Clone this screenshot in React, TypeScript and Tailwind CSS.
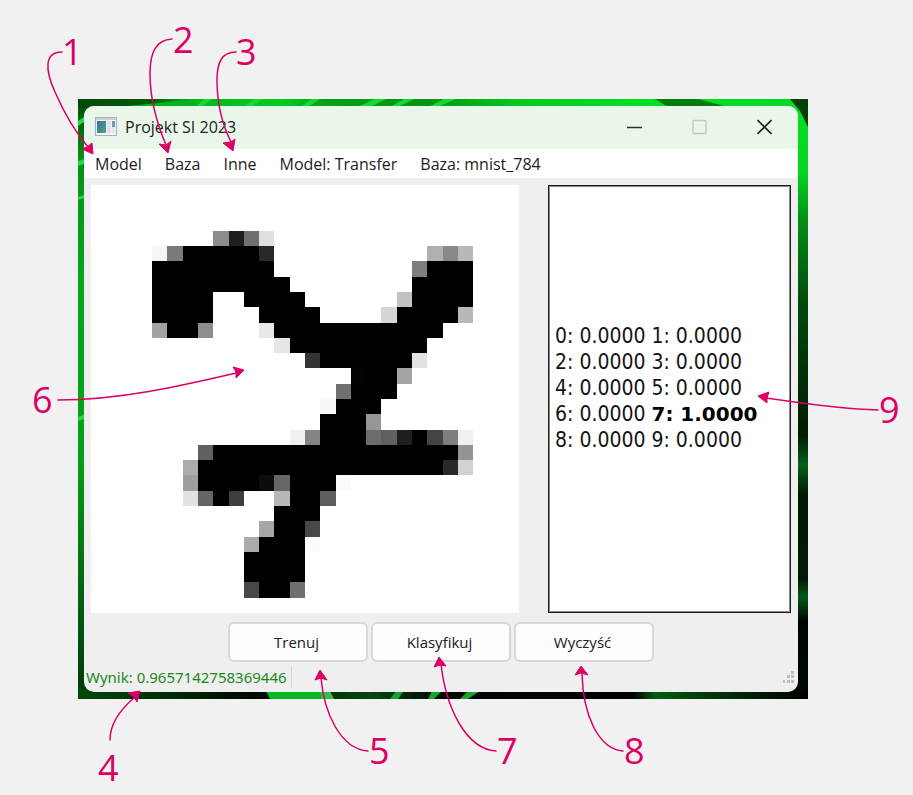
import React from "react";

type Run = [col: number, length: number, shade: string];

const K = "#000000";

// Each entry is one row of the 28x28 drawing grid: [first column, run length, colour]
const DIGIT: Record<number, Run[]> = {
  3: [[8, 1, "#8c8c8c"], [9, 1, "#1e1e1e"], [10, 1, "#707070"], [11, 1, "#e0e0e0"]],
  4: [[4, 1, "#f5f5f5"], [5, 1, "#7a7a7a"], [6, 5, K], [11, 1, "#282828"], [22, 1, "#b0b0b0"], [23, 1, "#888888"], [24, 1, "#b8b8b8"]],
  5: [[4, 8, K], [21, 1, "#7e7e7e"], [22, 3, K]],
  6: [[4, 9, K], [21, 4, K]],
  7: [[4, 4, K], [10, 4, K], [20, 1, "#c2c2c2"], [21, 4, K]],
  8: [[4, 4, K], [11, 4, K], [19, 1, "#d6d6d6"], [20, 4, K], [24, 1, "#b8b8b8"]],
  9: [[4, 1, "#a2a2a2"], [5, 2, K], [7, 1, "#8e8e8e"], [11, 1, "#e8e8e8"], [12, 11, K]],
  10: [[12, 1, "#e6e6e6"], [13, 9, K]],
  11: [[14, 1, "#343434"], [15, 6, K], [21, 1, "#e2e2e2"]],
  12: [[17, 1, "#030303"], [18, 2, K], [20, 1, "#a4a4a4"]],
  13: [[16, 1, "#707070"], [17, 3, K]],
  14: [[15, 1, "#f8f8f8"], [16, 3, K]],
  15: [[15, 3, K], [18, 1, "#969696"]],
  16: [[13, 1, "#f0f0f0"], [14, 1, "#848484"], [15, 3, K], [18, 1, "#6c6c6c"], [19, 1, "#606060"], [20, 1, "#1e1e1e"], [21, 1, K], [22, 1, "#444444"], [23, 1, "#7e7e7e"], [24, 1, "#f0f0f0"]],
  17: [[7, 1, "#606060"], [8, 16, K], [24, 1, "#949494"]],
  18: [[6, 1, "#acacac"], [7, 16, K], [23, 1, "#282828"], [24, 1, "#d2d2d2"]],
  19: [[6, 1, "#9e9e9e"], [7, 4, K], [11, 1, "#0c0c0c"], [12, 1, "#666666"], [13, 3, K], [16, 1, "#fafafa"]],
  20: [[6, 1, "#e2e2e2"], [7, 1, "#646464"], [8, 1, K], [9, 1, "#3e3e3e"], [12, 1, "#b8b8b8"], [13, 2, K], [15, 1, "#5e5e5e"]],
  21: [[12, 3, K]],
  22: [[11, 1, "#a6a6a6"], [12, 2, K], [14, 1, "#484848"]],
  23: [[10, 1, "#aaaaaa"], [11, 3, K], [14, 1, "#fcfcfc"]],
  24: [[10, 4, K]],
  25: [[10, 4, K]],
  26: [[10, 1, "#484848"], [11, 2, K], [13, 1, "#707070"]],
};

function DigitCanvas() {
  return (
    <svg viewBox="0 0 28 28" shapeRendering="crispEdges" className="block aspect-square w-full bg-white" role="img" aria-label="7">
      {Object.entries(DIGIT).map(([row, runs]) =>
        runs.map(([col, length, shade]) => (
          <rect key={`${row}-${col}`} x={col} y={Number(row)} width={length} height={1} fill={shade} />
        )),
      )}
    </svg>
  );
}

function Wallpaper() {
  return (
    <svg viewBox="0 0 730 600" preserveAspectRatio="none" className="absolute inset-0 h-full w-full" aria-hidden="true">
      <defs>
        <linearGradient id="wpTop" x1="0" x2="1" y1="0" y2="0">
          <stop offset="0" stopColor="#004a0a" />
          <stop offset="0.1" stopColor="#025a0c" />
          <stop offset="0.16" stopColor="#04b81c" />
          <stop offset="0.28" stopColor="#03cc1e" />
          <stop offset="0.34" stopColor="#03a018" />
          <stop offset="0.48" stopColor="#029414" />
          <stop offset="0.6" stopColor="#04c81e" />
          <stop offset="0.78" stopColor="#04e024" />
          <stop offset="1" stopColor="#04d822" />
        </linearGradient>
        <linearGradient id="wpLeft" x1="0" x2="0" y1="0" y2="1">
          <stop offset="0" stopColor="#004a0a" />
          <stop offset="0.1" stopColor="#04901a" />
          <stop offset="0.3" stopColor="#03a818" />
          <stop offset="0.6" stopColor="#03a016" />
          <stop offset="0.85" stopColor="#025c10" />
          <stop offset="1" stopColor="#013808" />
        </linearGradient>
        <linearGradient id="wpRight" x1="0" x2="0" y1="0" y2="1">
          <stop offset="0" stopColor="#04e024" />
          <stop offset="0.12" stopColor="#04d822" />
          <stop offset="0.2" stopColor="#029014" />
          <stop offset="0.34" stopColor="#004a0c" />
          <stop offset="0.56" stopColor="#001c04" />
          <stop offset="0.61" stopColor="#04601a" />
          <stop offset="0.66" stopColor="#001804" />
          <stop offset="0.8" stopColor="#001c06" />
          <stop offset="0.83" stopColor="#045a16" />
          <stop offset="0.87" stopColor="#000400" />
          <stop offset="1" stopColor="#000800" />
        </linearGradient>
        <linearGradient id="wpBottom" x1="0" x2="1" y1="0" y2="0">
          <stop offset="0" stopColor="#014a0c" />
          <stop offset="0.12" stopColor="#012c06" />
          <stop offset="0.24" stopColor="#000600" />
          <stop offset="0.4" stopColor="#024a0e" />
          <stop offset="0.5" stopColor="#000400" />
          <stop offset="0.76" stopColor="#000000" />
          <stop offset="0.79" stopColor="#045c12" />
          <stop offset="0.9" stopColor="#012806" />
          <stop offset="1" stopColor="#000000" />
        </linearGradient>
      </defs>
      <rect width="730" height="600" fill="#012c06" />
      <rect width="10" height="600" fill="url(#wpLeft)" />
      <rect x="715" width="15" height="600" fill="url(#wpRight)" />
      <rect y="590" width="730" height="10" fill="url(#wpBottom)" />
      <rect width="730" height="9" fill="url(#wpTop)" />
      <path d="M50 7 100 2 120 0 112 8Z" fill="#04b41c" />
      <path d="M118 8 126 0H134L124 8ZM166 8 176 0H184L174 8ZM222 8 234 0H242L230 8ZM280 8 296 0H308L292 8ZM312 8 326 0H336L320 8ZM350 8 366 0H378L360 8Z" fill="#16d832" />
      <path d="M577 0 590 8H650L620 0Z" fill="#027c12" />
      <path d="M712 0H730V28L722 12Z" fill="#014208" />
      <path d="M0 22 6 18V23L0 27ZM0 62 6 60V65L0 67ZM0 98 6 96V99L0 101ZM0 318 6 316V320L0 322Z" fill="#26d844" />
      <path d="M188 592H244V600H192Z" fill="#05b824" />
      <path d="M242 592H252L256 600H244Z" fill="#30c24c" />
      <path d="M318 592H326L320 600H312ZM354 592H364L356 600H350ZM390 592H402L390 600H382Z" fill="#14a42e" />
    </svg>
  );
}

function TitleBar() {
  return (
    <header className="flex h-[43px] items-center bg-[#e9f7eb] pb-[2px] pl-[11px] pr-[26px]">
      <svg width="22" height="20" viewBox="0 0 22 20" aria-hidden="true">
        <defs>
          <linearGradient id="appIcon" x1="0" x2="1" y1="0" y2="1">
            <stop offset="0" stopColor="#3a6ea8" />
            <stop offset="1" stopColor="#4fa777" />
          </linearGradient>
        </defs>
        <rect x="0.5" y="0.5" width="21" height="18" fill="#f2f4f5" stroke="#a9b1b5" />
        <rect x="1" y="1" width="20" height="2" fill="#c9d0d6" />
        <rect x="2" y="4" width="9" height="12" fill="url(#appIcon)" />
        <rect x="12" y="4" width="4" height="12" fill="#e0e2ea" />
        <rect x="17" y="4" width="3" height="6" fill="#6f98b4" />
        <rect x="17" y="10" width="3" height="6" fill="#e4e8e8" />
      </svg>
      <h1 className="ml-2 flex-1 text-[16px] leading-5 text-[#202320]">Projekt SI 2023</h1>
      <div className="flex gap-[50px]">
        <button type="button" aria-label="Minimalizuj">
          <svg width="15" height="16" viewBox="0 0 15 16"><path d="M0 8.5H15" stroke="#2c312d" strokeWidth="1.6" /></svg>
        </button>
        <button type="button" aria-label="Maksymalizuj" disabled>
          <svg width="15" height="16" viewBox="0 0 15 16"><rect x="1" y="1.5" width="13" height="13" rx="1" fill="none" stroke="#bccabe" strokeWidth="1.4" /></svg>
        </button>
        <button type="button" aria-label="Zamknij">
          <svg width="15" height="16" viewBox="0 0 15 16"><path d="M0.5 1 14.5 15M14.5 1 0.5 15" stroke="#222623" strokeWidth="1.6" /></svg>
        </button>
      </div>
    </header>
  );
}

const MENU = ["Model", "Baza", "Inne", "Model: Transfer", "Baza: mnist_784"];

function MenuBar() {
  return (
    <nav className="flex h-[29px] items-center gap-[23px] bg-white pl-[11px] text-[16px] leading-5 text-[#1c1c1c]">
      {MENU.map((item) => (
        <button key={item} type="button" className="whitespace-nowrap">{item}</button>
      ))}
    </nav>
  );
}

function Results() {
  return (
    <output className="flex w-[243px] shrink-0 flex-col justify-center border border-[#1c1c1c] bg-white pb-[22px] pl-[6px] font-['DejaVu_Sans_Condensed','DejaVu_Sans',sans-serif] text-[21px] leading-[26px] text-[#141414] ring-1 ring-inset ring-[#8a8a8a]">
      <span>0: 0.0000 1: 0.0000</span>
      <span>2: 0.0000 3: 0.0000</span>
      <span>4: 0.0000 5: 0.0000</span>
      <span className="whitespace-nowrap">
        6: 0.0000 <b className="font-['DejaVu_Sans',sans-serif] text-[20px] text-black">7: 1.0000</b>
      </span>
      <span>8: 0.0000 9: 0.0000</span>
    </output>
  );
}

function SizeGrip() {
  return (
    <svg width="12" height="12" viewBox="0 0 12 12" fill="#bdbdbd" aria-hidden="true">
      <path d="M9 0h3v3h-3zM5 4h3v3h-3zM9 4h3v3h-3zM1 9h2v3h-2zM5 9h3v3h-3zM9 9h3v3h-3z" />
    </svg>
  );
}

function AppWindow() {
  return (
    <section className="relative overflow-hidden rounded-[10px] bg-[#efefef]">
      <TitleBar />
      <MenuBar />
      <div className="flex gap-[29px] px-[7px] pt-[7px]">
        <div className="min-w-0 flex-1">
          <DigitCanvas />
        </div>
        <Results />
      </div>
      <div className="mt-[9px] flex justify-center gap-[3px] text-[15px] leading-5 text-[#202020]">
        {["Trenuj", "Klasyfikuj", "Wyczyść"].map((label) => (
          <button key={label} type="button" className="h-10 w-[140px] rounded-[6px] border-2 border-[#d8d8d8] bg-[#fdfdfd] pr-[3px]">
            {label}
          </button>
        ))}
      </div>
      <footer className="flex h-[30px] items-center justify-between pl-[2px] pr-1">
        <p className="border-r border-[#d4d4d4] pr-1 font-['Noto_Sans',sans-serif] text-[15px] leading-[22px] text-[#1a8a1a]">
          Wynik: 0.9657142758369446
        </p>
        <SizeGrip />
      </footer>
    </section>
  );
}

const CURVES = [
  "M62 52C44 52 45 70 55 92C65 115 77 134 88 147",
  "M172 39C156 40 150 52 150 74C150 100 158 126 166 145",
  "M236 52C222 52 217 62 217 80C217 106 224 128 231 142",
  "M110 740C110 722 122 708 135 697",
  "M368 751C340 749 324 712 321 678",
  "M58 400C120 400 180 386 236 373",
  "M496 751C466 749 446 708 441 664",
  "M623 751C598 749 583 714 582 674",
  "M878 410C838 409 800 403 766 398",
];

const HEADS = [
  "M93 154 82 149 87 147 92 143Z",
  "M168 153 159 144 166 145 171 141Z",
  "M233 151 223 143 231 142 235 139Z",
  "M140 691 128 693 134 697 137 702Z",
  "M320 670 315 680 321 678 327 680Z",
  "M244 370 233 367 236 372 236 378Z",
  "M439 657 434 667 440 665 446 666Z",
  "M581 666 575 675 581 673 588 675Z",
  "M758 396 769 392 767 398 767 403Z",
];

const LABELS: [text: string, x: number, y: number][] = [
  ["1", 62, 65],
  ["2", 173, 53],
  ["3", 236, 65],
  ["4", 98, 781],
  ["5", 369, 764],
  ["6", 32, 413],
  ["7", 497, 764],
  ["8", 624, 764],
  ["9", 879, 423],
];

function Annotations() {
  return (
    <svg viewBox="0 0 913 795" className="pointer-events-none absolute inset-x-0 top-0 w-full" fill="none">
      {CURVES.map((d) => <path key={d} d={d} stroke="#dc0064" strokeWidth="1.5" strokeLinecap="round" />)}
      {HEADS.map((d) => <path key={d} d={d} fill="#dc0064" stroke="#dc0064" strokeLinejoin="round" />)}
      {LABELS.map(([text, x, y]) => (
        <text key={text} x={x} y={y} className="fill-[#dc0064] font-['Open_Sans',sans-serif] text-[36px]">{text}</text>
      ))}
    </svg>
  );
}

export default function App() {
  return (
    <main className="min-h-screen bg-[#f1f1f1] font-['Open_Sans',sans-serif]">
      <div className="relative mx-auto w-full max-w-[913px] pb-24 pl-[78px] pr-[105px] pt-[99px]">
        <div className="relative pb-[7px] pl-[6px] pr-[10px] pt-[7px]">
          <Wallpaper />
          <AppWindow />
        </div>
        <Annotations />
      </div>
    </main>
  );
}
